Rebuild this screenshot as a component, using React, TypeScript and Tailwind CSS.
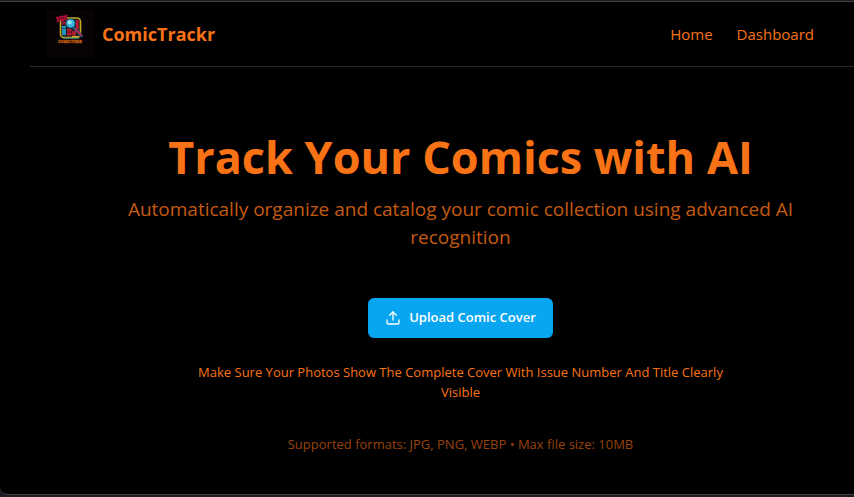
function Logo() {
  return (
    <svg viewBox="0 0 48 48" className="size-12 bg-[#070206]" aria-hidden="true">
      <rect x="14.5" y="8" width="20" height="19.5" rx="3.5" fill="#1c1a24" stroke="#c2a820" strokeWidth="1.6" />
      <path d="M17 28.2h16" stroke="#2f8f8a" strokeWidth="1" />
      <rect x="16" y="16" width="4" height="9" fill="#2193b8" />
      <rect x="16" y="18" width="4" height="1" fill="#14506e" />
      <rect x="21" y="19" width="4.5" height="6.5" fill="#c01530" />
      <path d="M21 22h5" stroke="#2a0a18" strokeWidth="0.8" />
      <rect x="26" y="21" width="4" height="4.5" fill="#a8202c" />
      <rect x="30" y="10" width="2.6" height="9" fill="#c5162f" />
      <rect x="16" y="11.5" width="4" height="3" fill="#8e1830" />
      <path d="M26 26.5h6" stroke="#d9b42a" strokeWidth="1" />
      <path d="M28 17.5 35.5 26" stroke="#1e4f80" strokeWidth="3" strokeLinecap="round" />
      <path d="m29.5 19 5.5 6" stroke="#d5223e" strokeWidth="1.7" strokeLinecap="round" />
      <circle cx="24.6" cy="13.4" r="4.5" fill="#38b4de" stroke="#17647f" strokeWidth="1" />
      <circle cx="23.6" cy="12.2" r="2" fill="#9be6f5" />
      <path d="m10 7 3 .2 1-1.2 3 .2 4-1.2-.6 2.6 1 1.8-3 .6-2.4 1.3-2-.8-3 1.4.3-2.4z" fill="#c50d3a" stroke="#c50d3a" strokeWidth="0.6" />
      <ellipse cx="13.7" cy="8.7" rx="1.2" ry="1" fill="none" stroke="#24101c" strokeWidth="0.7" />
      <path d="m15.8 9.5.2-2 1 1.2.8-1.4.4 1.8M20.5 6.8l-1.2.7.4 1.2 1-.5" fill="none" stroke="#24101c" strokeWidth="0.6" />
      <text x="24" y="32.8" textAnchor="middle" className="font-['Open_Sans',sans-serif] text-[4px] font-extrabold" fill="#c05a10" stroke="#c05a10" strokeWidth="0.3">
        COMICTRKR
      </text>
    </svg>
  );
}

function UploadIcon() {
  return (
    <svg viewBox="0 0 24 24" className="size-4" fill="none" stroke="currentColor" strokeWidth="2" strokeLinecap="round" strokeLinejoin="round" aria-hidden="true">
      <path d="M21 15v4a2 2 0 0 1-2 2H5a2 2 0 0 1-2-2v-4" />
      <path d="m17 8-5-5-5 5" />
      <path d="M12 3v12" />
    </svg>
  );
}

export default function App() {
  return (
    <div className="min-h-screen overflow-hidden bg-[#1c1b22] font-['Open_Sans','Noto_Sans',sans-serif] text-[#f97316]">
      <div className="mt-px rounded-bl-lg border-y border-[#42414a] bg-black pb-10">
        <header className="ml-[30px] flex items-center justify-between border-b border-[#27272a] py-2 pr-10 pl-4">
          <a href="#home" className="flex items-center gap-2">
            <Logo />
            <span className="text-[18px] leading-7 font-bold">ComicTrackr</span>
          </a>
          <nav className="flex gap-6 text-[15px] leading-6">
            <a href="#home">Home</a>
            <a href="#dashboard">Dashboard</a>
          </nav>
        </header>
        <main className="flex flex-col items-center pt-[66px] pl-[67px] text-center">
          <h1 className="text-[45px] leading-12 font-bold">Track Your Comics with AI</h1>
          <p className="mt-[14px] max-w-[704px] text-[19px] leading-7 text-[#f97316]/80">
            Automatically organize and catalog your comic collection using advanced AI recognition
          </p>
          <button type="button" className="mt-[47px] flex h-10 items-center gap-2 rounded-md bg-[#08a5f0] px-[17px] text-[13px] font-semibold text-white">
            <UploadIcon />
            Upload Comic Cover
          </button>
          <p className="mt-6 max-w-[560px] text-[13px] leading-5">
            Make Sure Your Photos Show The Complete Cover With Issue Number And Title Clearly Visible
          </p>
          <p className="mt-8 text-[13px] leading-5 text-[#f97316]/60">
            Supported formats: JPG, PNG, WEBP • Max file size: 10MB
          </p>
        </main>
      </div>
    </div>
  );
}
